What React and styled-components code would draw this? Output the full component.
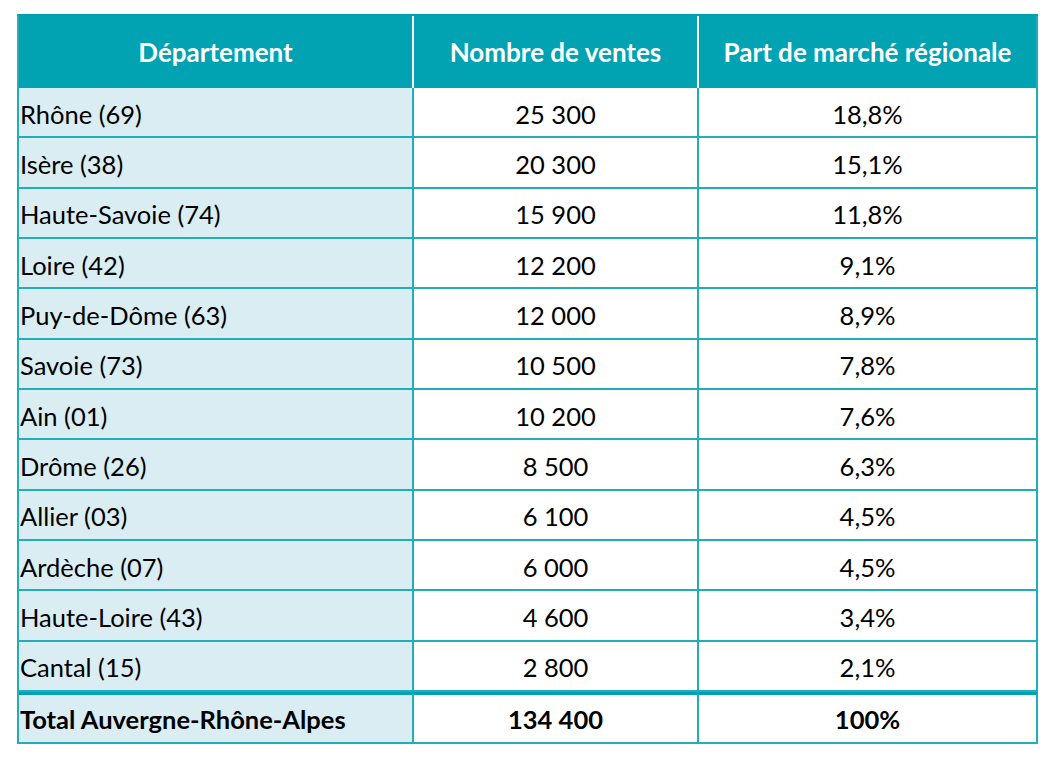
import React from 'react';
import styled, { createGlobalStyle } from 'styled-components';

const GlobalStyle = createGlobalStyle`
  html, body {
    margin: 0;
    padding: 0;
    background: #ffffff;
  }
  body {
    font-family: 'Lato', 'Liberation Sans', sans-serif;
  }
`;

const Page = styled.div`
  padding: 14px 0 0 17px;
  width: 1054px;
  height: 760px;
  box-sizing: border-box;
`;

const Grid = styled.div`
  display: grid;
  grid-template-columns: 395px 285px 339px;
  width: 1021px;
  box-sizing: border-box;
  border-left: 2px solid #22adbb;
  border-top: 2px solid #00a2b2;
`;

const HeadCell = styled.div`
  box-sizing: border-box;
  height: 72px;
  background: #01a2b2;
  color: #ffffff;
  font-weight: 700;
  font-size: 26px;
  display: flex;
  align-items: center;
  justify-content: center;
  border-right: 2px solid ${(p) => (p.$last ? '#22adbb' : '#ffffff')};
  padding-bottom: 1px;
`;

const Cell = styled.div`
  box-sizing: border-box;
  height: ${(p) => (p.$total ? '52px' : '50.33px')};
  background: ${(p) => (p.$first ? '#daedf3' : '#ffffff')};
  color: #000000;
  font-size: 25.5px;
  font-weight: ${(p) => (p.$total ? 700 : 400)};
  display: flex;
  align-items: center;
  justify-content: ${(p) => (p.$first ? 'flex-start' : 'center')};
  padding-left: ${(p) => (p.$first ? '1px' : '0')};
  padding-top: ${(p) => (p.$total ? '1px' : '3px')};
  border-right: 2px solid #22adbb;
  border-bottom: 2px solid #22adbb;
  border-top: ${(p) => (p.$total ? '3px solid #00a2b2' : '0')};
`;

const rows = [
  ['Rhône (69)', '25 300', '18,8%'],
  ['Isère (38)', '20 300', '15,1%'],
  ['Haute-Savoie (74)', '15 900', '11,8%'],
  ['Loire (42)', '12 200', '9,1%'],
  ['Puy-de-Dôme (63)', '12 000', '8,9%'],
  ['Savoie (73)', '10 500', '7,8%'],
  ['Ain (01)', '10 200', '7,6%'],
  ['Drôme (26)', '8 500', '6,3%'],
  ['Allier (03)', '6 100', '4,5%'],
  ['Ardèche (07)', '6 000', '4,5%'],
  ['Haute-Loire (43)', '4 600', '3,4%'],
  ['Cantal (15)', '2 800', '2,1%'],
];

export default function App() {
  return (
    <Page>
      <GlobalStyle />
      <Grid>
        <HeadCell>Département</HeadCell>
        <HeadCell>Nombre de ventes</HeadCell>
        <HeadCell $last>Part de marché régionale</HeadCell>
        {rows.map(([dep, ventes, part]) => (
          <React.Fragment key={dep}>
            <Cell $first>{dep}</Cell>
            <Cell>{ventes}</Cell>
            <Cell>{part}</Cell>
          </React.Fragment>
        ))}
        <Cell $first $total>Total Auvergne-Rhône-Alpes</Cell>
        <Cell $total>134 400</Cell>
        <Cell $total>100%</Cell>
      </Grid>
    </Page>
  );
}
